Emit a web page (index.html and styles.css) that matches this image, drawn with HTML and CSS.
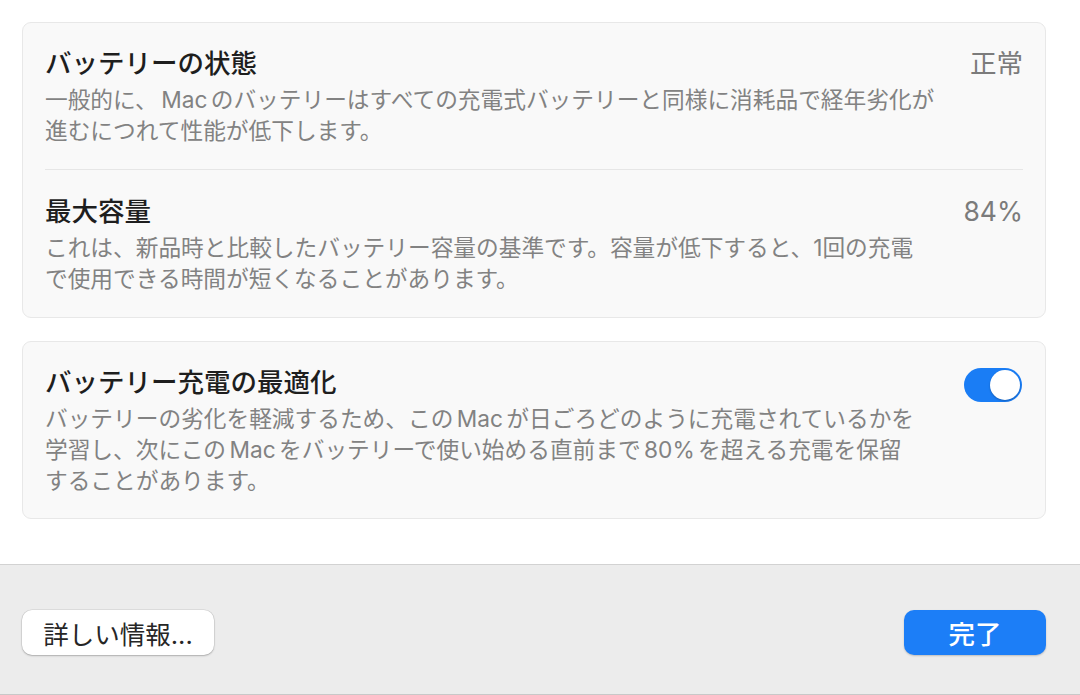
FILE: index.html
```html
<!DOCTYPE html>
<html lang="ja">
    <head>
        <meta charset="utf-8">
        <link rel="stylesheet" href="styles.css">
    </head>
    <body>
        <div class="content">
            <div class="card">
                <div class="row">
                    <div class="row-head">
                        <div class="title">バッテリーの状態</div>
                        <div class="value">正常</div>
                    </div>
                    <p class="desc">一般的に、<span class="latin">Mac</span>のバッテリーはすべての充電式バッテリーと同様に消耗品で経年劣化が<br>進むにつれて性能が低下します。</p>
                </div>
                <div class="row">
                    <div class="row-head">
                        <div class="title">最大容量</div>
                        <div class="value">84%</div>
                    </div>
                    <p class="desc">これは、新品時と比較したバッテリー容量の基準です。容量が低下すると、1回の充電<br>で使用できる時間が短くなることがあります。</p>
                </div>
            </div>
            <div class="card">
                <div class="row switch-row">
                    <div class="row-head">
                        <div class="title">バッテリー充電の最適化</div>
                        <div class="toggle on"><span class="knob"></span></div>
                    </div>
                    <p class="desc">バッテリーの劣化を軽減するため、この<span class="latin">Mac</span>が日ごろどのように充電されているかを<br>学習し、次にこの<span class="latin">Mac</span>をバッテリーで使い始める直前まで<span class="latin">80%</span>を超える充電を保留<br>することがあります。</p>
                </div>
            </div>
        </div>
        <div class="footer">
            <button class="btn">詳しい情報...</button>
            <button class="btn primary">完了</button>
        </div>
    </body>
</html>
```

FILE: styles.css
```css
html, body {
    margin: 0;
    height: 100%;
}
body {
    display: flex;
    flex-direction: column;
    background: #fff;
    font-family: Inter, "Noto Sans CJK JP", sans-serif;
    color: #222;
}
.content {
    flex: 1;
    padding: 22px 34px 0 22px;
    display: flex;
    flex-direction: column;
    gap: 23px;
}
.card {
    background: #f9f9f9;
    border: solid 1px #e8e8e8;
    border-radius: 9px;
    padding: 0 22px;
}
.row {
    padding: 23px 0 23px;
}
.row + .row {
    border-top: solid 1px #e6e6e6;
    padding-top: 24px;
}
.row-head {
    display: flex;
    justify-content: space-between;
    align-items: flex-start;
}
.title {
    font-size: 26.5px;
    font-weight: 500;
    line-height: 34px;
    color: #1e1e1e;
}
.value {
    font-size: 26.5px;
    line-height: 34px;
    color: #7b7b7b;
}
.desc {
    margin: 4px 0 0;
    font-size: 22.7px;
    line-height: 31px;
    color: #828282;
    white-space: nowrap;
}
.switch-row {
    padding-bottom: 22px;
}
.switch-row .desc {
    margin-top: 1px;
}
.latin {
    margin: 0 0.15em;
}
.toggle {
    width: 58px;
    height: 34px;
    border-radius: 17px;
    background: #1a7df5;
    margin-top: 3px;
    margin-right: 1px;
    position: relative;
}
.knob {
    position: absolute;
    top: 2px;
    right: 2px;
    width: 30px;
    height: 30px;
    border-radius: 50%;
    background: #fff;
    box-shadow: 0 1px 2px rgba(0, 0, 0, 0.25);
}
.footer {
    height: 131px;
    flex: none;
    border-top: solid 1px #d2d2d2;
    border-bottom: solid 1px #c8c8c8;
    background: #ececec;
    display: flex;
    justify-content: space-between;
    align-items: flex-start;
    padding: 45px 34px 0 22px;
    box-sizing: border-box;
}
.btn {
    height: 45px;
    border: none;
    border-radius: 10px;
    background: #fff;
    box-shadow: 0 0 0 0.5px rgba(0, 0, 0, 0.12), 0 1px 2px rgba(0, 0, 0, 0.22);
    font-family: Inter, "Noto Sans CJK JP", sans-serif;
    font-size: 25.5px;
    color: #262626;
    padding: 0;
    width: 192px;
}
.btn.primary {
    width: 142px;
    background: #1c7ef7;
    color: #fff;
    font-weight: 500;
    font-size: 26.5px;
    box-shadow: 0 1px 2px rgba(0, 0, 0, 0.2);
}
```
